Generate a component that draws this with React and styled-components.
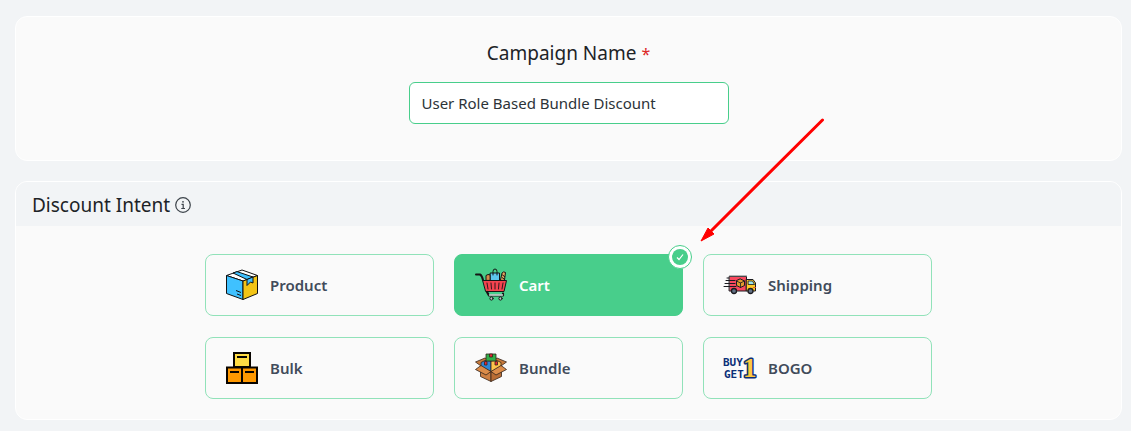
import React, { useState } from "react";
import styled, { createGlobalStyle } from "styled-components";

const GREEN = "#48ce8b";
const INK = "#1d2327";

const GlobalStyle = createGlobalStyle`
  *, *::before, *::after { box-sizing: border-box; }
  body {
    margin: 0;
    background: #f2f4f6;
    color: ${INK};
    font-family: "Segoe UI", "Noto Sans", "Open Sans", sans-serif;
  }
`;

const Page = styled.main`
  display: flex;
  flex-direction: column;
  gap: 20px;
  padding: 16px 9px 11px 15px;
`;

const Panel = styled.section`
  background: #fafafa;
  border: 1px solid #fff;
  border-radius: 12px;
`;

const NamePanel = styled(Panel)`
  display: flex;
  flex-direction: column;
  align-items: center;
  gap: 15px;
  padding: 22px 20px 36px;
`;

const NameLabel = styled.label`
  font-size: 19px;
  line-height: 28px;
`;

const Required = styled.span`
  color: #dc2626;
  font-size: 16px;
  line-height: 1;
`;

const NameInput = styled.input`
  width: 320px;
  max-width: 100%;
  height: 42px;
  padding: 0 12px;
  border: 1px solid ${GREEN};
  border-radius: 6px;
  background: #fff;
  color: #2c3338;
  font: inherit;
  font-size: 15px;
  outline: none;
`;

const PanelHeader = styled.header`
  display: flex;
  align-items: center;
  gap: 5px;
  height: 44px;
  padding: 2px 16px 0;
  border-radius: 11px 11px 0 0;
  background: #f2f4f6;
`;

const PanelTitle = styled.h2`
  margin: 0;
  font-size: 19px;
  font-weight: 400;
  line-height: 28px;
`;

const Options = styled.div`
  display: grid;
  grid-template-columns: repeat(3, 1fr);
  gap: 21px 20px;
  max-width: 727px;
  margin: 0 auto;
  padding: 28px 0 20px;
`;

const OptionCard = styled.label`
  position: relative;
  display: flex;
  align-items: center;
  gap: 12px;
  height: 62px;
  padding: 0 20px;
  border: 1px solid ${(p) => (p.$active ? GREEN : "#91e2b9")};
  border-radius: 8px;
  background: ${(p) => (p.$active ? GREEN : "#fafafa")};
  color: ${(p) => (p.$active ? "#fff" : "#414b5a")};
  font-size: 15px;
  font-weight: 600;
  line-height: 24px;
  cursor: pointer;
`;

const Radio = styled.input`
  position: absolute;
  inset: 0;
  margin: 0;
  opacity: 0;
  cursor: pointer;
`;

const OptionIcon = styled.svg`
  flex: none;
  width: 32px;
  height: 32px;
  overflow: visible;
`;

const Badge = styled.span`
  position: absolute;
  top: -10px;
  right: -10px;
  display: flex;
  width: 24px;
  height: 24px;
  padding: 3px;
  border: 1px solid ${GREEN};
  border-radius: 50%;
  background: #fff;
`;

const Pointer = styled.svg`
  position: absolute;
  left: calc(100% + 18px);
  bottom: calc(100% + 12px);
  z-index: 1;
  width: 126px;
  height: 126px;
  pointer-events: none;
`;

const ProductIcon = () => (
  <OptionIcon viewBox="0 0 32 32" aria-hidden="true">
    <g stroke="#111" strokeLinejoin="round">
      <path d="M16 1 31.500 6.500 17 12 .5 6.500Z" fill="#fff" />
      <path d="M.5 6.500 17 12V30.500L.5 24.500Z" fill="#3fc1ff" />
      <path d="M31.500 6.500 17 12V30.500L31.500 24.500Z" fill="#f2c416" />
      <path d="M7 4 11 2.6 27 8 21 10.5Z" fill="#3fc1ff" />
      <path d="M21 10.5 27 8V14L24.5 13 21 16.500Z" fill="#3fc1ff" />
      <path d="M10 21.500 15 23.500M11 25 15 26.500" fill="none" />
    </g>
  </OptionIcon>
);

const CartIcon = () => (
  <OptionIcon viewBox="0 0 32 32" aria-hidden="true">
    <g stroke="#151515" strokeLinejoin="round" strokeLinecap="round">
      <path d="M11 11V6.500L13 5.500 15.500 6V11Z" fill="#d38c4b" />
      <path d="M25.500 11 27 4Q28.500 2 30.500 3.500L29.500 11Z" fill="#e5a55d" />
      <path d="m27.500 6 2 1.500m-2.500 1 2 1.500" fill="none" />
      <path d="M15.500 4H24.500V11.500H15.500Z" fill="#5dc7ed" />
      <path d="M18 6V2.500Q18 0 20 0T22 2.500V6" fill="none" />
      <path d="M1 5.500H5Q7 6.500 8 11" fill="none" strokeWidth="2" />
      <path d="M8 11.500H31.500L29 22.500H11Z" fill="#f4434f" />
      <path d="m12 14 1 6m3-6 .5 6m3.500-6v6m4-6-.5 6m4.500-6-1 6" fill="none" strokeWidth=".9" />
      <path d="M12 23 14 26.500H28V24.500" fill="none" strokeWidth="2.200" />
      <path d="M14.500 26H27.500" stroke="#d5e7e2" strokeWidth="1.400" />
      <circle cx="16.500" cy="29.500" r="1.600" fill="#b9c9cb" />
      <circle cx="25.500" cy="29.500" r="1.600" fill="#b9c9cb" />
    </g>
  </OptionIcon>
);

const ShippingIcon = () => (
  <OptionIcon viewBox="0 0 32 32" aria-hidden="true">
    <g stroke="#1b1b20" strokeLinejoin="round" strokeLinecap="round">
      <path d="M5.500 7.500H22.500V22H5.500Z" fill="#f9485e" />
      <path d="M5.500 7H22.500" stroke="#777" strokeWidth="1" />
      <path d="M22.500 10.500H29L31.500 14V22H22.500Z" fill="#ffc928" />
      <path d="M24.500 12H28.500L30.500 15.500H24.500Z" fill="#9ce5ed" strokeWidth=".8" />
      <path d="M29.500 18.500h2" stroke="#e35a3b" />
      <path d="M16.500 10 20.500 12V16.500L16.500 18.500 12.500 16.500V12Z" fill="#e19a2e" />
      <path d="m12.500 12 4 2 4-2m-4 2v4.500" fill="none" strokeWidth=".8" />
      <path d="M2 11.500H11M1 14.500H11M0 17.500H12M3 9H5" fill="none" />
      <circle cx="10" cy="22" r="2.500" fill="#637286" strokeWidth="1.300" />
      <circle cx="26.500" cy="22" r="2.500" fill="#637286" strokeWidth="1.300" />
    </g>
  </OptionIcon>
);

const BulkIcon = () => (
  <OptionIcon viewBox="0 0 32 32" aria-hidden="true">
    <g stroke="#080400" strokeWidth="2">
      <path d="M8 1H24V15H8Z" fill="#ffdc43" />
      <path d="M1 15.500H16V31H1ZM16 15.500H31V31H16Z" fill="#ff9800" />
      <path d="M11 5H21M4 20H13M19 20H28" />
    </g>
  </OptionIcon>
);

const BundleIcon = () => (
  <OptionIcon viewBox="0 0 32 32" aria-hidden="true">
    <g stroke="#35251c" strokeWidth=".8" strokeLinejoin="round">
      <path d="M.5 10 10 6 16 9 6 14ZM31.500 10 22 6 16 9 26 14Z" fill="#c77a3c" />
      <path d="M6 10.500 10 8.500 16 9V20L6 14.500Z" fill="#2f86d5" />
      <path d="M26 10.500 22 8.500 16 9V20L26 14.500Z" fill="#ffc44b" />
      <path d="M11 2H21V9H11Z" fill="#2fae49" />
      <path d="M14.500 2H17.500V5H14.500ZM9.500 9.500H12V13H9.500ZM20 9.500H22.500V13H20Z" fill="#e92735" />
      <path d="M5.500 15 16 20V29.500L5.500 24.500Z" fill="#cf8042" />
      <path d="M26.500 15 16 20V29.500L26.500 24.500Z" fill="#b96d35" />
      <path d="M6 13.500 16 19.500 11 23 .5 17.500ZM26 13.500 16 19.500 21 23 31.500 17.500Z" fill="#dc8c49" />
    </g>
  </OptionIcon>
);

const BogoIcon = () => (
  <OptionIcon viewBox="0 0 32 32" aria-hidden="true">
    <g fill="#0b2f78" fontFamily="'DejaVu Sans Mono', monospace" fontSize="11" fontWeight="700">
      <text x="-1" y="14">BUY</text>
      <text x="0" y="26">GET</text>
    </g>
    <text
      x="19"
      y="25"
      fill="#ffc83d"
      stroke="#0b2f78"
      strokeWidth="3"
      paintOrder="stroke"
      strokeLinejoin="round"
      fontFamily="'Liberation Serif', serif"
      fontSize="27"
      fontWeight="700"
    >
      1
    </text>
  </OptionIcon>
);

const InfoIcon = () => (
  <svg width="16" height="16" viewBox="0 0 16 16" fill="none" stroke="#3c434a" role="img" aria-label="Information">
    <circle cx="8" cy="8" r="7.300" strokeWidth="1.200" />
    <circle cx="8" cy="4.800" r=".9" fill="#3c434a" stroke="none" />
    <path d="M6.500 7.300H8.200V11.500M6.300 11.500H10" strokeWidth="1.200" />
  </svg>
);

const intents = [
  { id: "product", label: "Product", Icon: ProductIcon },
  { id: "cart", label: "Cart", Icon: CartIcon, pointed: true },
  { id: "shipping", label: "Shipping", Icon: ShippingIcon },
  { id: "bulk", label: "Bulk", Icon: BulkIcon },
  { id: "bundle", label: "Bundle", Icon: BundleIcon },
  { id: "bogo", label: "BOGO", Icon: BogoIcon },
];

export default function App() {
  const [name, setName] = useState("User Role Based Bundle Discount");
  const [intent, setIntent] = useState("cart");

  return (
    <>
      <GlobalStyle />
      <Page>
        <NamePanel>
          <NameLabel htmlFor="campaign-name">
            Campaign Name <Required>*</Required>
          </NameLabel>
          <NameInput
            id="campaign-name"
            type="text"
            required
            value={name}
            onChange={(e) => setName(e.target.value)}
          />
        </NamePanel>
        <Panel>
          <PanelHeader>
            <PanelTitle id="intent-title">Discount Intent</PanelTitle>
            <InfoIcon />
          </PanelHeader>
          <Options role="radiogroup" aria-labelledby="intent-title">
            {intents.map(({ id, label, Icon, pointed }) => (
              <OptionCard key={id} $active={intent === id}>
                <Radio
                  type="radio"
                  name="intent"
                  value={id}
                  checked={intent === id}
                  onChange={() => setIntent(id)}
                />
                <Icon />
                {label}
                {intent === id && (
                  <Badge>
                    <svg width="16" height="16" viewBox="0 0 16 16" aria-hidden="true">
                      <circle cx="8" cy="8" r="8" fill={GREEN} />
                      <path d="M5 8.500 7 10.500 11 5.500" fill="none" stroke="#fff" strokeWidth="1.200" />
                    </svg>
                  </Badge>
                )}
                {pointed && (
                  <Pointer viewBox="0 0 126 126" aria-hidden="true">
                    <path d="M122.500 3 10 115" stroke="#f00" strokeWidth="3" strokeLinecap="round" />
                    <path d="M1 124 8 111 10 113 14 117Z" fill="#f00" stroke="#f00" strokeLinejoin="round" />
                  </Pointer>
                )}
              </OptionCard>
            ))}
          </Options>
        </Panel>
      </Page>
    </>
  );
}
